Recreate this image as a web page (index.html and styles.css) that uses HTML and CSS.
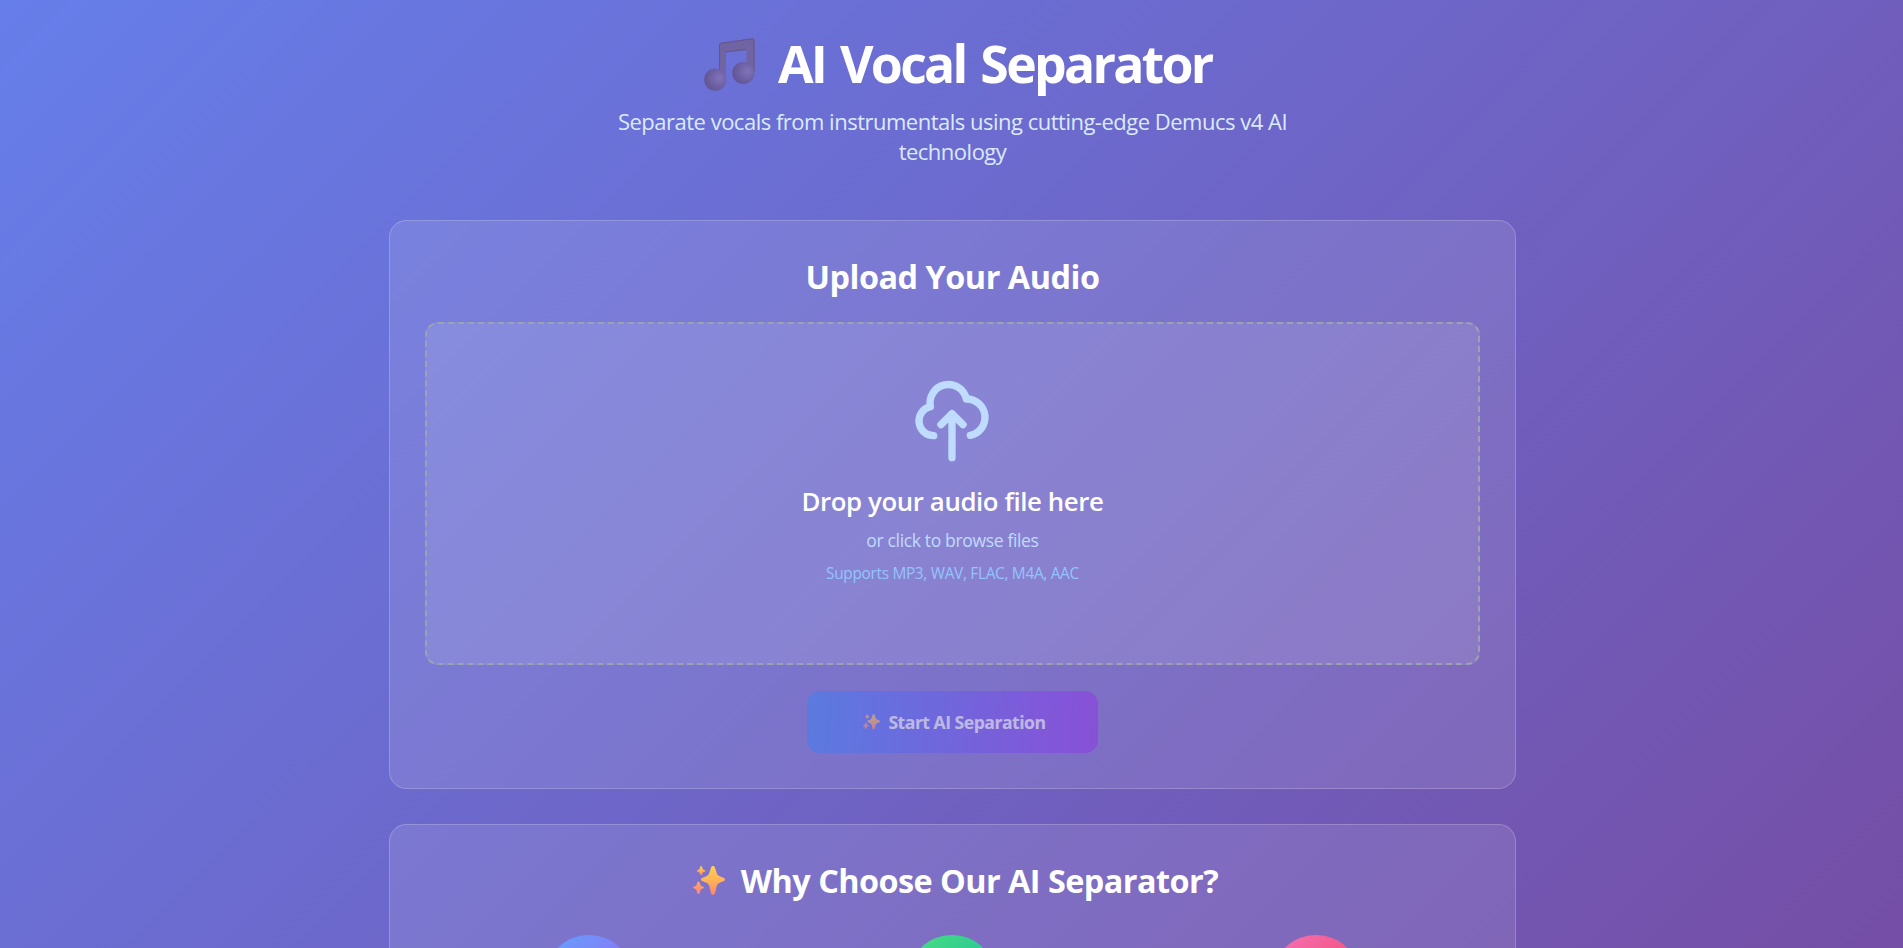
FILE: index.html
```
<!DOCTYPE html>
<html lang="en">
<head>
<meta charset="utf-8">
<title>AI Vocal Separator</title>
<link rel="stylesheet" href="styles.css">
</head>
<body>
<svg class="defs" width="0" height="0" aria-hidden="true">
  <defs>
    <linearGradient id="spark" x1="0" y1="0" x2="0" y2="1">
      <stop offset="0" stop-color="#ffd04f"/>
      <stop offset="0.5" stop-color="#ffb357"/>
      <stop offset="1" stop-color="#ff8570"/>
    </linearGradient>
    <linearGradient id="spark-small" x1="0" y1="0" x2="0" y2="1">
      <stop offset="0" stop-color="#ffa763"/>
      <stop offset="1" stop-color="#ff8278"/>
    </linearGradient>
    <radialGradient id="ball" cx="0.68" cy="0.42" r="0.65">
      <stop offset="0" stop-color="#8073b8"/>
      <stop offset="0.55" stop-color="#7062a6"/>
      <stop offset="1" stop-color="#625694"/>
    </radialGradient>
    <symbol id="sparkles" viewBox="0 0 32 29">
      <path fill="url(#spark)" d="M20 0c1.100 0 1.700.700 2 1.700l1.700 5.300c.500 1.600 1.500 2.600 3.100 3.200l4.200 1.700c1.300.600 1.300 2.600 0 3.200l-4.200 1.700c-1.600.700-2.600 1.700-3.100 3.200L22 27.300c-.600 2-3.400 2-4 0l-1.700-7.300c-.500-1.500-1.500-2.500-3.100-3.200L9 15.100c-1.300-.600-1.300-2.600 0-3.200l4.200-1.700c1.600-.600 2.600-1.600 3.100-3.200L18 1.700C18.300.700 18.900 0 20 0z"/>
      <path fill="url(#spark)" d="M8 0c.500 0 .800.300 1 .800l.600 1.900c.2.500.5.800 1 1l1.400.5c.6.300.6 1 0 1.300l-1.400.5c-.5.200-.8.500-1 1L9 8.400c-.3.900-1.500.9-1.800 0L6.600 7c-.2-.5-.5-.8-1-1l-1.300-.5c-.6-.3-.6-1 0-1.300l1.300-.5c.5-.2.800-.5 1-1L7.100.800C7.300.300 7.500 0 8 0z"/>
      <path fill="url(#spark-small)" d="M5.500 15.500c.600 0 1 .400 1.200 1l.8 2.400c.2.600.6 1 1.200 1.200l1.700.7c.7.300.7 1.200 0 1.500l-1.700.7c-.6.200-1 .6-1.200 1.200l-.8 3.100c-.4 1.100-2 1.100-2.400 0l-.8-3.100c-.2-.6-.6-1-1.200-1.200l-1.700-.7c-.7-.3-.7-1.200 0-1.500l1.700-.7c.6-.2 1-.6 1.200-1.200l.8-2.400c.2-.6.600-1 1.200-1z"/>
    </symbol>
  </defs>
</svg>
<div class="page">
<div class="container">
  <header class="header">
    <h1 class="title">
      <svg class="title-icon" viewBox="0 0 51 53" aria-hidden="true">
        <path fill="#7164a2" d="M15 7.200q0-2.200 2.200-2.500L48 .300q2.500-.3 2.500 2V35h-8V11.900L22 14.300V43h-7z"/>
        <path fill="none" stroke="#62568f" stroke-width="1" d="M15.600 40V7.200q0-1.700 1.800-2L48 .900q1.900-.2 2 1.400V34M22 13.900l20-2.400"/>
        <circle cx="11.300" cy="41.700" r="11.100" fill="url(#ball)"/>
        <circle cx="39.300" cy="35" r="11.100" fill="url(#ball)"/>
      </svg>
      <span class="title-text">AI Vocal Separator</span>
    </h1>
    <p class="subtitle">Separate vocals from instrumentals using cutting-edge Demucs v4 AI technology</p>
  </header>

  <section class="card">
    <h2 class="heading heading-upload">Upload Your Audio</h2>
    <div class="dropzone">
      <svg class="cloud" viewBox="0 0 24 24" fill="none" stroke="currentColor" stroke-width="2" stroke-linecap="round" stroke-linejoin="round" aria-hidden="true">
        <path d="M7 16a4 4 0 01-.88-7.903A5 5 0 1115.900 6L16 6a5 5 0 011 9.900M15 13l-3-3m0 0l-3 3m3-3v12"/>
      </svg>
      <h3 class="drop-title">Drop your audio file here</h3>
      <p class="drop-hint">or click to browse files</p>
      <p class="drop-formats">Supports MP3, WAV, FLAC, M4A, AAC</p>
    </div>
    <button class="start" type="button" disabled>
      <svg class="start-icon" aria-hidden="true"><use href="#sparkles"/></svg>
      <span>Start AI Separation</span>
    </button>
  </section>

  <section class="card">
    <h2 class="heading heading-why">
      <svg class="why-icon" aria-hidden="true"><use href="#sparkles"/></svg>
      <span>Why Choose Our AI Separator?</span>
    </h2>
    <div class="features">
      <div class="badge badge-blue"></div>
      <div class="badge badge-green"></div>
      <div class="badge badge-pink"></div>
    </div>
  </section>
</div>
</div>
</body>
</html>
```
FILE: styles.css
```
* { box-sizing: border-box; margin: 0; padding: 0; }

html { font-size: 17.6px; }

body {
  color: #fff;
  font-family: "Segoe UI", "Open Sans", "Noto Sans", sans-serif;
}

.defs { display: block; height: 0; }

.page {
  height: 100vh;
  overflow: hidden;
  padding-left: 2px;
  background: linear-gradient(135deg, #667eea 0%, #754ea6 100%);
}

.container {
  width: 64rem;
  margin: 0 auto;
  padding-top: 2rem;
}

.header { margin-bottom: 3rem; text-align: center; }

.title {
  display: flex;
  justify-content: center;
  align-items: center;
  height: 3rem;
  margin-bottom: 1rem;
  padding-left: 11px;
  font-size: 51.700px;
  font-weight: 700;
  line-height: 3rem;
  letter-spacing: -2.700px;
  word-spacing: 4px;
  white-space: nowrap;
}

.title-icon { width: 51px; height: 53px; margin-right: 22.500px; margin-top: 6px; }
.title-text { padding-top: 3px; }

.subtitle {
  width: 42rem;
  margin: 0 auto;
  color: #dbeafe;
  font-size: 22px;
  line-height: 1.750rem;
  letter-spacing: -0.500px;
}

.card {
  margin-bottom: 35px;
  padding: 2rem;
  border: 1px solid rgba(255, 255, 255, 0.2);
  border-radius: 1rem;
  background: rgba(255, 255, 255, 0.1);
}

.heading {
  font-size: 32.400px;
  font-weight: 700;
  line-height: 2.250rem;
  text-align: center;
  white-space: nowrap;
}

.heading-upload {
  height: 2.250rem;
  margin-bottom: 1.500rem;
  padding-top: 1px;
  letter-spacing: -0.480px;
}

.heading-why {
  display: flex;
  justify-content: center;
  align-items: center;
  height: 2.250rem;
  margin-bottom: 2rem;
  padding: 2px 0 0 6px;
  letter-spacing: -0.540px;
}

.why-icon { width: 32px; height: 29px; margin-right: 16px; }

.dropzone {
  height: 343px;
  padding: 3rem;
  border: 2px dashed #9ca3af;
  border-radius: 0.750rem;
  background: rgba(255, 255, 255, 0.1);
  text-align: center;
}

.cloud {
  display: block;
  width: 5rem;
  height: 5rem;
  margin: 0 auto 1rem;
  color: #bfdbfe;
}

.drop-title {
  height: 2rem;
  margin-bottom: 0.500rem;
  padding-top: 1px;
  font-size: 25.800px;
  font-weight: 600;
  line-height: 2rem;
  letter-spacing: -0.400px;
}

.drop-hint {
  margin-bottom: 0.500rem;
  color: #bfdbfe;
  font-size: 1rem;
  line-height: 1.500rem;
  letter-spacing: -0.380px;
}

.drop-formats {
  padding-top: 1px;
  color: #93c5fd;
  font-size: 0.875rem;
  line-height: 1.250rem;
  letter-spacing: -0.306px;
}

.start {
  display: flex;
  justify-content: center;
  align-items: center;
  width: 291px;
  height: 3.500rem;
  margin: 26px auto 0;
  padding: 1px 0 0 4px;
  border: 0;
  border-radius: 0.750rem;
  background: linear-gradient(to right, #3b82f6, #9333ea);
  color: #fff;
  font: inherit;
  font-size: 1rem;
  font-weight: 700;
  line-height: 1.500rem;
  letter-spacing: -0.500px;
  opacity: 0.5;
}

.start-icon { width: 17px; height: 16px; margin-right: 8px; }

.features {
  display: grid;
  grid-template-columns: repeat(3, 1fr);
  gap: 2rem;
  justify-items: center;
}

.badge { width: 5rem; height: 5rem; border-radius: 50%; }
.badge-blue { background: linear-gradient(135deg, #60a5fa, #a855f7); }
.badge-green { background: linear-gradient(135deg, #4ade80, #14b8a6); }
.badge-pink { background: linear-gradient(135deg, #f472b6, #f43f5e); }
```
